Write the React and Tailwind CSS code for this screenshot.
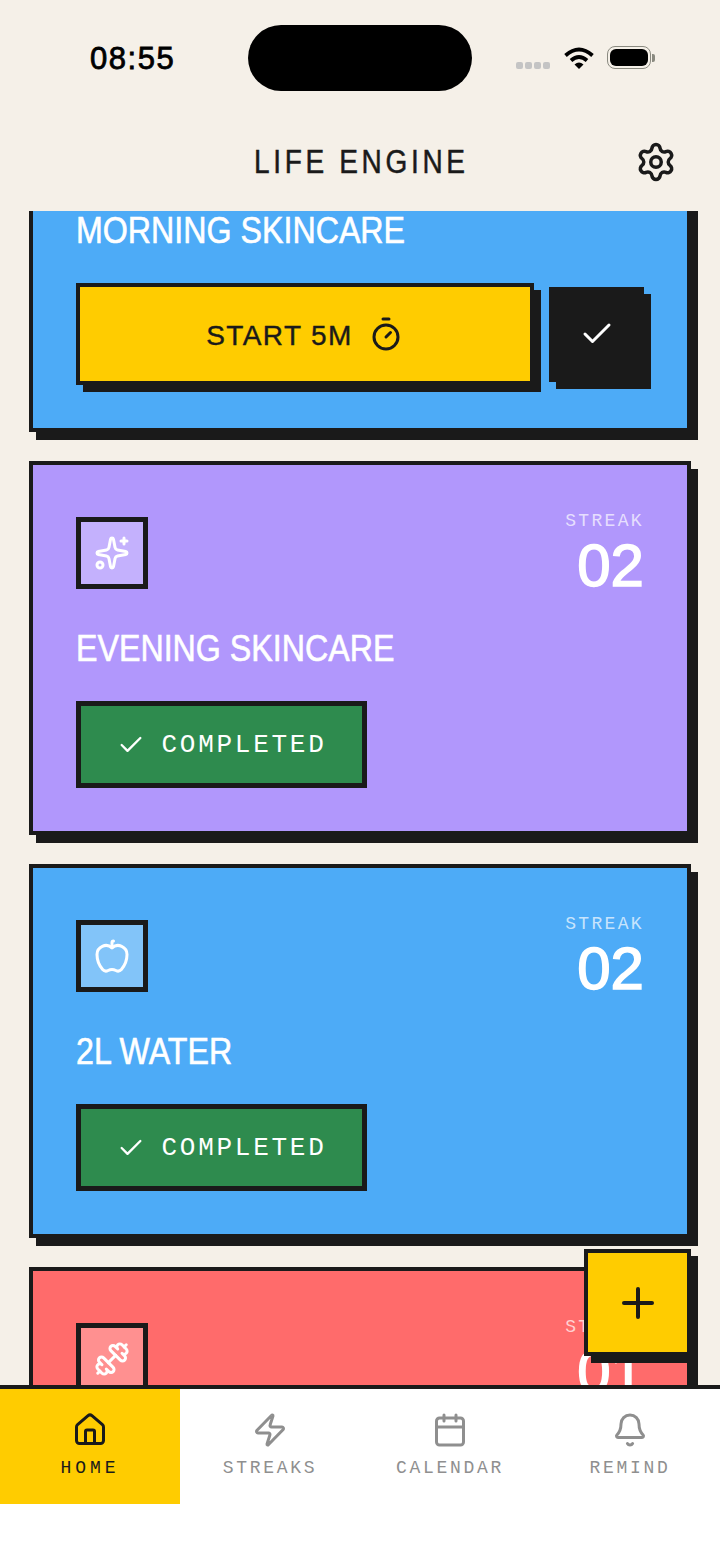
import React from "react";
import { Settings, Timer, Check, Sparkles, Apple, Dumbbell, House, Zap, Calendar, Bell, Plus } from "lucide-react";

function Streak({ value }) {
  return (
    <div className="flex flex-col items-end">
      <span className="font-['Liberation_Mono',monospace] text-[18px] leading-[22px] tracking-[0.13em] mr-[-1px] text-white/70">STREAK</span>
      <span className="mt-[5px] mr-[-1px] font-['Liberation_Sans',sans-serif] text-[60px] leading-[58px] text-white [-webkit-text-stroke:1.5px_#fff]">{value}</span>
    </div>
  );
}

function Completed() {
  return (
    <div className="flex items-center justify-center gap-[17px] w-[291px] h-[87px] border-[5px] border-[#1a1a1a] bg-[#2e8b4e] text-white">
      <Check size={28} strokeWidth={2} />
      <span className="font-['Liberation_Mono',monospace] text-[26px] leading-none tracking-[0.105em]">COMPLETED</span>
    </div>
  );
}

function Card({ color, light, Icon, title, value, children }) {
  return (
    <div className={`w-[662px] border-4 border-[#1a1a1a] shadow-[7px_8px_0_#1a1a1a] pt-[52px] pb-[43px] pl-[43px] pr-[44px] ${color}`}>
      <div className="flex items-start justify-between h-[72px]">
        <div className={`flex items-center justify-center w-[72px] h-[72px] border-[5px] border-[#1a1a1a] text-white ${light}`}>
          <Icon size={36} strokeWidth={2} />
        </div>
        <div className="-mt-[7px]">
          <Streak value={value} />
        </div>
      </div>
      <h2 className="mt-[38px] mb-[30px] h-[44px] origin-left scale-x-[0.87] whitespace-nowrap font-['Liberation_Sans',sans-serif] text-[37px] leading-[44px] font-normal text-white [-webkit-text-stroke:0.6px_#fff]">{title}</h2>
      {children}
    </div>
  );
}

function NavItem({ Icon, label, active }) {
  return (
    <div className={`flex flex-col items-center w-[180px] h-[115px] pt-[23px] ${active ? "bg-[#ffcc00] text-[#1a1a1a]" : "text-[#8f8f8f]"}`}>
      <Icon size={36} strokeWidth={2} />
      <span className={`mt-[9px] font-['Liberation_Mono',monospace] text-[18px] leading-[22px] ${active ? "tracking-[0.22em]" : "tracking-[0.15em]"}`}>{label}</span>
    </div>
  );
}

export default function App() {
  return (
    <div className="relative flex flex-col w-[720px] h-[1565px] overflow-hidden bg-[#f5f0e8] text-[#1a1a1a]">
      <div className="flex items-start h-[115px] shrink-0">
        <span className="ml-[90px] mt-[41px] w-[158px] font-['Liberation_Sans',sans-serif] text-[31px] leading-[36px] tracking-[0.05em] text-black [-webkit-text-stroke:0.8px_#000]">08:55</span>
        <div className="mt-[25px] w-[224px] h-[66px] rounded-[33px] bg-black"></div>
        <div className="flex items-start ml-[44px]">
          <div className="flex gap-[2px] mt-[62px] mr-[14px]">
            <span className="w-[7px] h-[7px] rounded-[2px] bg-[#c4c4c4]"></span>
            <span className="w-[7px] h-[7px] rounded-[2px] bg-[#c4c4c4]"></span>
            <span className="w-[7px] h-[7px] rounded-[2px] bg-[#c4c4c4]"></span>
            <span className="w-[7px] h-[7px] rounded-[2px] bg-[#c4c4c4]"></span>
          </div>
          <svg className="mt-[47px] mr-[13px]" width="30" height="22" viewBox="0 0 30 22" fill="none">
            <path d="M1.5 8.5 Q15 -3.5 28.5 8.5" stroke="#000" strokeWidth="3.8" />
            <path d="M7 13.5 Q15 6.5 23 13.5" stroke="#000" strokeWidth="3.8" />
            <path d="M15 22 L10.5 17.5 Q15 13.5 19.5 17.5 Z" fill="#000" />
          </svg>
          <div className="flex items-center mt-[46px]">
            <div className="w-[44px] h-[23px] p-[2px] border border-[#8a8a80] rounded-[8px]">
              <div className="w-full h-full rounded-[6px] bg-black"></div>
            </div>
            <div className="ml-[1px] w-[3px] h-[8px] rounded-r-[2px] bg-[#8a8a80]"></div>
          </div>
        </div>
      </div>

      <div className="flex items-center justify-between h-[96px] shrink-0 pb-[3px] pl-[254px] pr-[43px]">
        <span className="origin-left scale-x-[0.85] whitespace-nowrap font-['Liberation_Sans',sans-serif] text-[33px] leading-[40px] tracking-[0.13em] [-webkit-text-stroke:0.5px_#1a1a1a]">LIFE ENGINE</span>
        <Settings size={42} strokeWidth={2} />
      </div>

      <div className="flex-1 min-h-0 overflow-hidden pl-[29px]">
        <div className="flex flex-col gap-[29px] -mt-[168px]">
          <Card color="bg-[#4dabf7]" light="bg-white/30" Icon={Sparkles} title="MORNING SKINCARE" value="05">
            <div className="flex items-center gap-[15px]">
              <div className="flex shrink-0 items-center justify-center gap-[15px] w-[458px] h-[102px] border-4 border-[#1a1a1a] bg-[#ffcc00] shadow-[7px_7px_0_#1a1a1a]">
                <span className="mt-[3px] font-['Liberation_Sans',sans-serif] text-[28px] leading-none tracking-[0.05em] [-webkit-text-stroke:0.4px_#1a1a1a]">START 5M</span>
                <Timer size={36} strokeWidth={2} />
              </div>
              <div className="flex shrink-0 items-center justify-center w-[95px] h-[95px] bg-[#1a1a1a] text-white shadow-[7px_7px_0_#1a1a1a]">
                <Check size={36} strokeWidth={2} />
              </div>
            </div>
          </Card>
          <Card color="bg-[#b197fc]" light="bg-white/25" Icon={Sparkles} title="EVENING SKINCARE" value="02">
            <Completed />
          </Card>
          <Card color="bg-[#4dabf7]" light="bg-white/30" Icon={Apple} title="2L WATER" value="02">
            <Completed />
          </Card>
          <Card color="bg-[#ff6b6b]" light="bg-white/25" Icon={Dumbbell} title="LEG DAY" value="01">
            <Completed />
          </Card>
        </div>
      </div>

      <div className="flex h-[180px] shrink-0 border-t-4 border-[#1a1a1a] bg-white">
        <NavItem Icon={House} label="HOME" active />
        <NavItem Icon={Zap} label="STREAKS" />
        <NavItem Icon={Calendar} label="CALENDAR" />
        <NavItem Icon={Bell} label="REMIND" />
      </div>

      <div className="absolute left-[584px] top-[1249px] flex items-center justify-center w-[107px] h-[107px] border-4 border-[#1a1a1a] bg-[#ffcc00] shadow-[7px_7px_0_#1a1a1a]">
        <Plus size={48} strokeWidth={2} />
      </div>
    </div>
  );
}
